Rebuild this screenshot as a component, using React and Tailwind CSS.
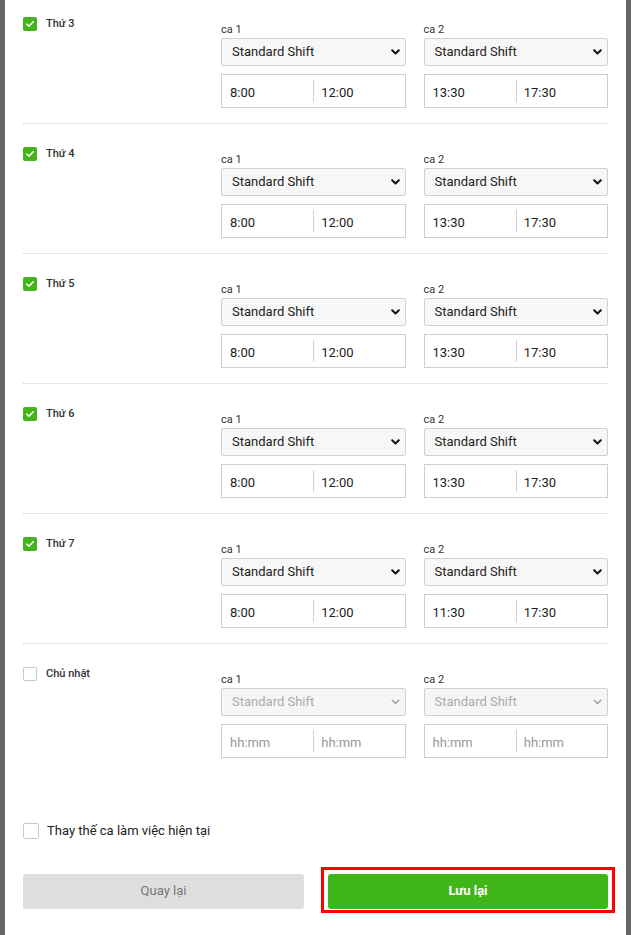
import React from 'react';

const days = [
  { label: 'Thứ 3', checked: true, a: ['8:00', '12:00'], b: ['13:30', '17:30'] },
  { label: 'Thứ 4', checked: true, a: ['8:00', '12:00'], b: ['13:30', '17:30'] },
  { label: 'Thứ 5', checked: true, a: ['8:00', '12:00'], b: ['13:30', '17:30'] },
  { label: 'Thứ 6', checked: true, a: ['8:00', '12:00'], b: ['13:30', '17:30'] },
  { label: 'Thứ 7', checked: true, a: ['8:00', '12:00'], b: ['11:30', '17:30'] },
  { label: 'Chủ nhật', checked: false, a: null, b: null },
];

function Check({ checked, size = 'w-[14px] h-[14px]' }) {
  if (checked) {
    return (
      <span className={`${size} rounded-[2px] bg-[#43b51b] flex items-center justify-center shrink-0`}>
        <svg width="10" height="10" viewBox="0 0 10 10" fill="none">
          <path d="M1.8 5.2 L4 7.2 L8.2 2.8" stroke="white" strokeWidth="1.6" strokeLinecap="round" strokeLinejoin="round" />
        </svg>
      </span>
    );
  }
  return <span className={`${size} rounded-[2px] border border-[#c8c8c8] bg-white shrink-0`} />;
}

function Chevron({ disabled }) {
  return (
    <svg width="9" height="6" viewBox="0 0 9 6" fill="none">
      <path d="M1.2 1.2 L4.5 4.5 L7.8 1.2" stroke={disabled ? '#9a9a9a' : '#111'} strokeWidth={disabled ? 1.3 : 2} strokeLinecap="round" strokeLinejoin="round" />
    </svg>
  );
}

function Shift({ name, times }) {
  const disabled = !times;
  return (
    <div className="flex flex-col pt-[6px]">
      <div className="h-[14px] leading-[14px] text-[11px] text-[#333] mb-[1px]">{name}</div>
      <div className={`h-[28px] border border-[#d2d2d2] rounded-[2px] flex items-center justify-between pl-[10px] pr-[5px] text-[13px] ${disabled ? 'bg-[#f6f6f6] text-[#aaa]' : 'bg-[#f7f7f7] text-[#222]'}`}>
        <span>Standard Shift</span>
        <Chevron disabled={disabled} />
      </div>
      <div className="mt-[8px] h-[34px] border border-[#cfcfcf] bg-white flex items-center text-[13px]">
        <div className={`flex-1 pl-[8px] pt-[3px] ${disabled ? 'text-[#999]' : 'text-[#222]'}`}>{disabled ? 'hh:mm' : times[0]}</div>
        <div className="w-px h-[22px] bg-[#d0d0d0]" />
        <div className={`flex-1 pl-[7px] pt-[3px] ${disabled ? 'text-[#999]' : 'text-[#222]'}`}>{disabled ? 'hh:mm' : times[1]}</div>
      </div>
    </div>
  );
}

function DayRow({ day, last }) {
  return (
    <div className={`flex pt-[23px] pb-[15px] ${last ? '' : 'border-b border-dotted border-[#cfcfcf]'}`}>
      <div className="w-[198px] flex items-start gap-[9px]">
        <Check checked={day.checked} />
        <span className="text-[11px] leading-[14px] font-medium text-[#333]">{day.label}</span>
      </div>
      <div className="flex-1 grid grid-cols-2 gap-[18px]">
        <Shift name="ca 1" times={day.a} />
        <Shift name="ca 2" times={day.b} />
      </div>
    </div>
  );
}

export default function App() {
  return (
    <div className="w-[631px] h-[935px] bg-[#666] overflow-hidden flex" style={{ fontFamily: 'Roboto, "Noto Sans", sans-serif' }}>
      <div className="ml-[5px] w-[621px] h-full bg-white px-[18px] flex flex-col">
        <div className="-mt-[6px]">
          {days.map((d, i) => (
            <DayRow key={d.label} day={d} last={i === days.length - 1} />
          ))}
        </div>
        <label className="mt-[48px] flex items-center gap-[8px]">
          <Check checked={false} size="w-[16px] h-[16px]" />
          <span className="text-[13px] text-[#222]">Thay thế ca làm việc hiện tại</span>
        </label>
        <div className="mt-[33px] flex items-start justify-between">
          <button className="w-[281px] h-[35px] rounded-[3px] bg-[#dedede] text-[13px] text-[#777]">Quay lại</button>
          <div className="border-[3px] border-[#f00] pt-[4px] pb-[1px] px-[4px] -mt-[7px] -mr-[7px]">
            <button className="block w-[280px] h-[35px] rounded-[3px] bg-[#41b619] text-[13px] font-bold text-white">Lưu lại</button>
          </div>
        </div>
      </div>
    </div>
  );
}
